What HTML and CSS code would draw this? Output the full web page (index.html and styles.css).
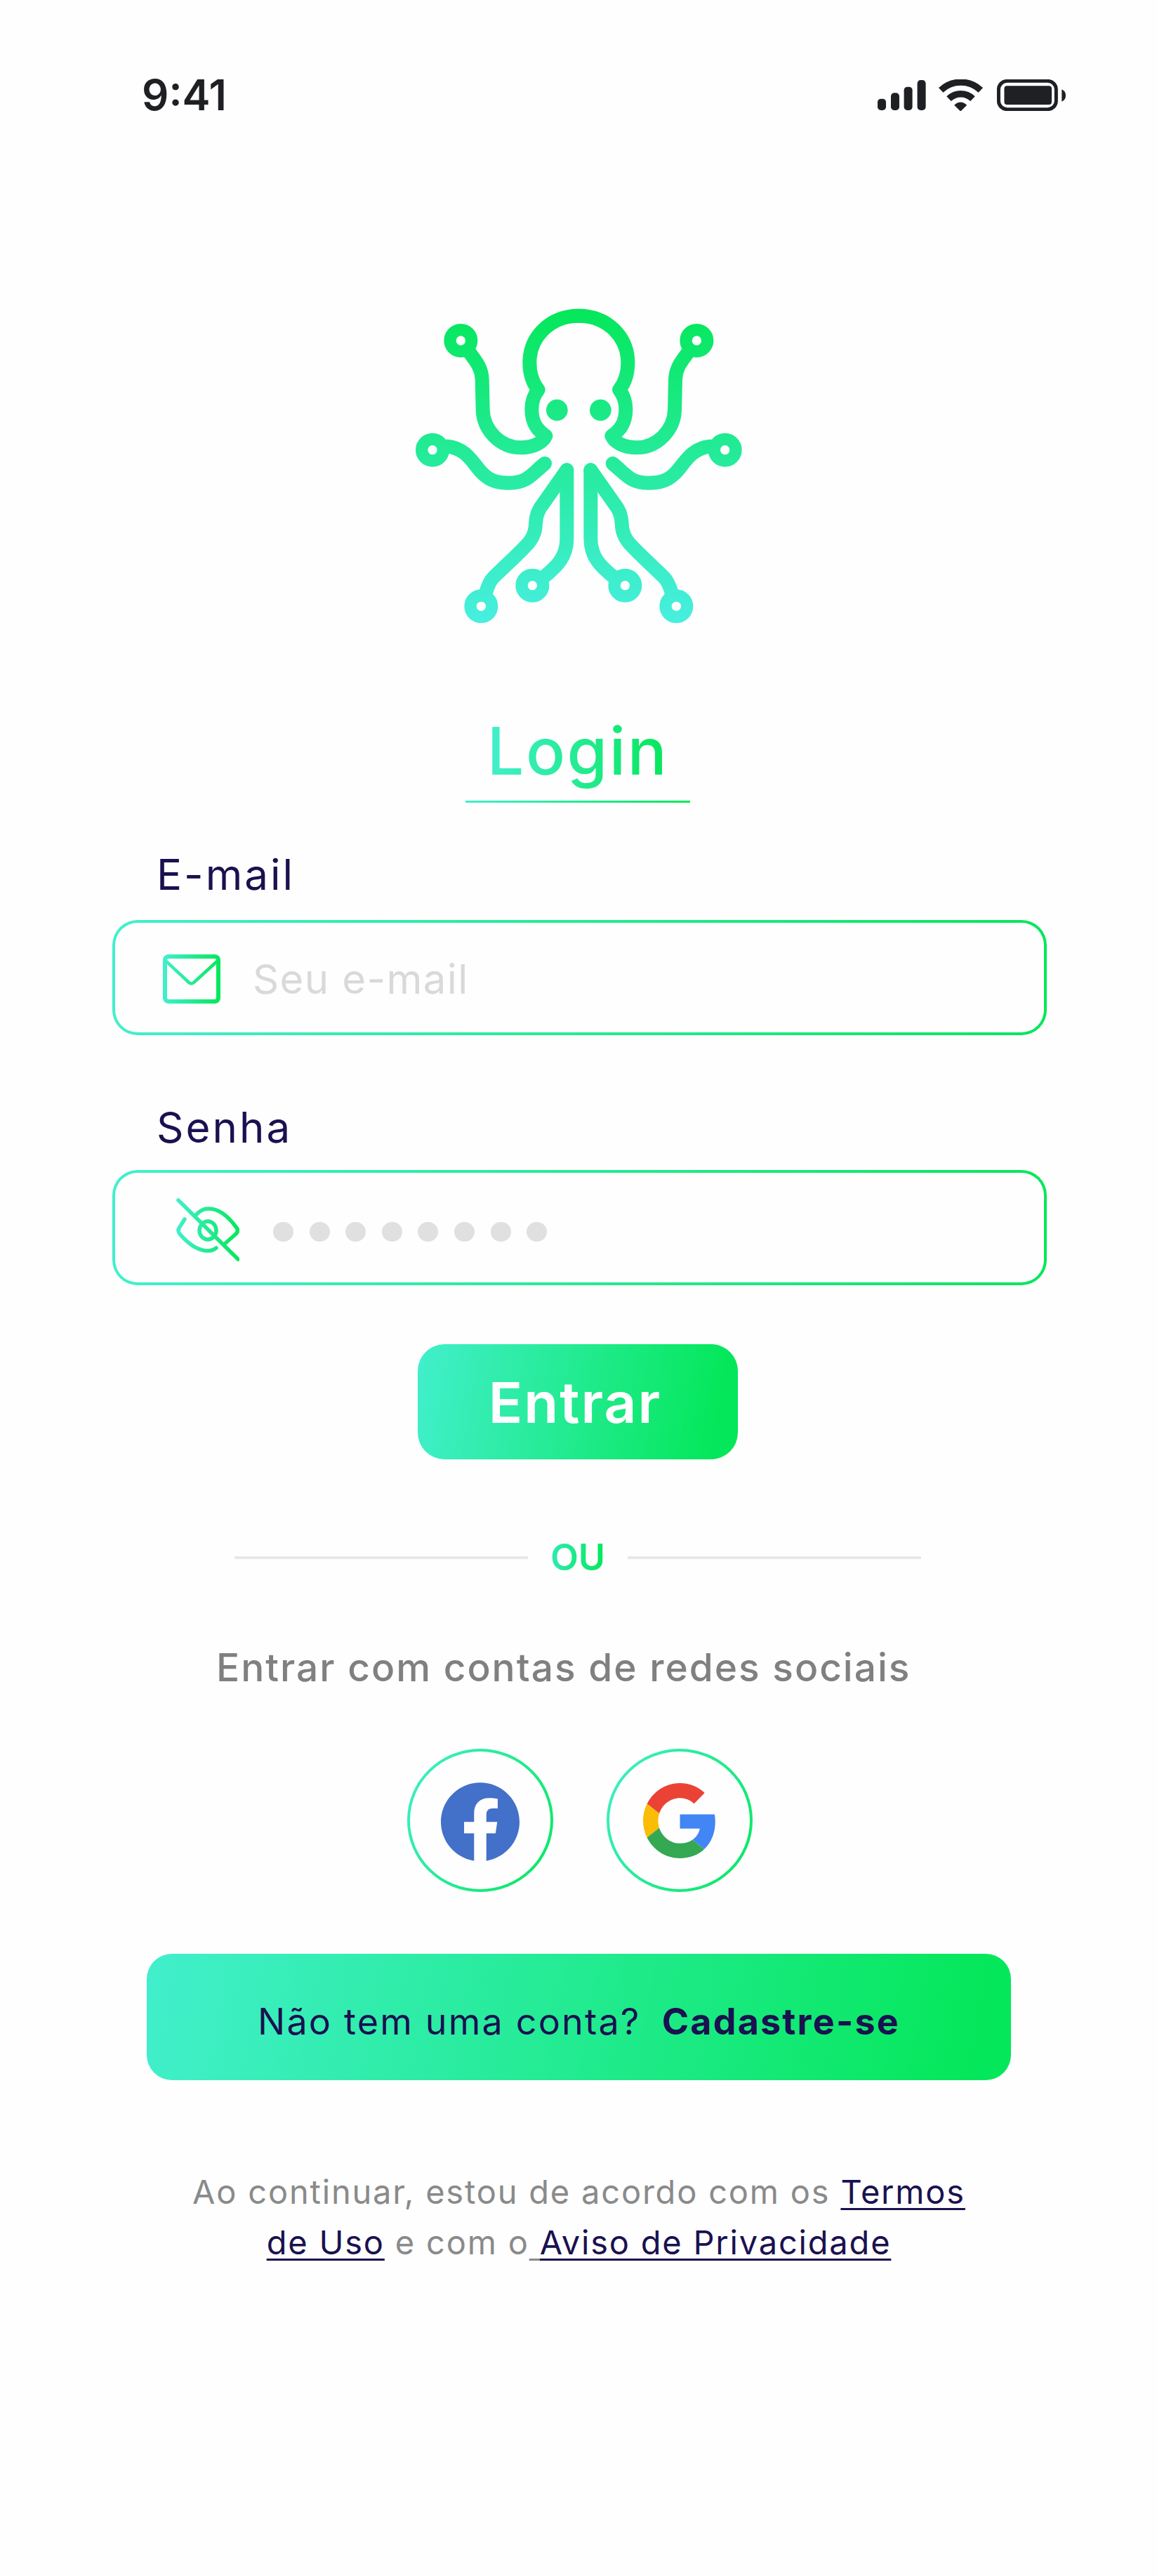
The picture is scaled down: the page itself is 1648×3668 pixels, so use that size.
FILE: index.html
```html
<!DOCTYPE html>
<html lang="pt-BR">
<head>
<meta charset="utf-8">
<title>Login</title>
<link rel="stylesheet" href="styles.css">
</head>
<body>
<svg class="defs" width="0" height="0" aria-hidden="true">
  <defs>
    <linearGradient id="logoGrad" gradientUnits="userSpaceOnUse" x1="0" y1="120" x2="0" y2="1460">
      <stop offset="0" stop-color="#05E75A"/><stop offset="1" stop-color="#47EFE0"/>
    </linearGradient>
    <linearGradient id="mailGrad" gradientUnits="userSpaceOnUse" x1="0" y1="0" x2="82" y2="0">
      <stop offset="0" stop-color="#42EFCC"/><stop offset="1" stop-color="#05E75A"/>
    </linearGradient>
    <linearGradient id="eyeGrad" gradientUnits="userSpaceOnUse" x1="0" y1="0" x2="90" y2="0">
      <stop offset="0" stop-color="#42EFCC"/><stop offset="1" stop-color="#05E75A"/>
    </linearGradient>
  </defs>
</svg>
<main class="page">
  <header class="status">
    <span class="time">9:41</span>
    <svg class="status-icons" viewBox="150 100 805 135" aria-hidden="true">
      <g fill="#1F2024">
        <rect x="150" y="183" width="36" height="49" rx="14"/>
        <rect x="207" y="158" width="36" height="74" rx="14"/>
        <rect x="263" y="132" width="36" height="100" rx="14"/>
        <rect x="320" y="103" width="36" height="129" rx="14"/>
        <path d="M505 237L478 210Q505 185 532 210Z"/>
        <rect x="692" y="128" width="203" height="80" rx="12"/>
        <path d="M938 143Q955 150 955 169Q955 188 938 195Z"/>
      </g>
      <g fill="none" stroke="#1F2024">
        <path stroke-width="28" d="M421 146A124 124 0 0 1 591 146"/>
        <path stroke-width="28" d="M455 183A73 73 0 0 1 557 183"/>
        <rect x="668" y="107" width="246" height="121" rx="36" stroke-width="15"/>
      </g>
    </svg>
  </header>

  <svg class="logo" viewBox="0 0 1560 1560" aria-label="Logo">
    <g fill="none" stroke="url(#logoGrad)" stroke-linecap="round" stroke-linejoin="round">
      <g id="halfOcto">
        <path stroke-width="60" d="M793 149C670 149 583 240 583 350C583 400 600 440 620 465C600 490 592 520 592 548C592 610 620 640 652 662C640 690 600 712 545 712C460 712 385 640 383 550L380 420C378 370 355 345 322 300"/>
        <circle cx="289" cy="255" r="46" stroke-width="52"/>
        <path stroke-width="60" stroke-linecap="butt" d="M218 709L232 707C320 715 345 790 385 825C420 860 460 863 495 863C570 863 590 830 648 780"/>
        <path stroke-width="60" d="M620 804L648 780"/>
        <circle cx="168" cy="722" r="46" stroke-width="52"/>
        <path stroke-width="60" d="M742 808L628 970C612 995 610 1020 608 1050C602 1110 575 1125 430 1265C415 1280 405 1300 395 1335"/>
        <circle cx="376" cy="1390" r="46" stroke-width="52"/>
        <path stroke-width="60" d="M742 808V1100C742 1180 700 1220 640 1268"/>
        <circle cx="595" cy="1301" r="46" stroke-width="52"/>
        <circle cx="700" cy="552" r="46" fill="url(#logoGrad)" stroke="none"/>
      </g>
      <use href="#halfOcto" transform="matrix(-1 0 0 1 1586 0)"/>
    </g>
  </svg>

  <h1 class="title"><span class="title-text">Login</span></h1>

  <form class="form">
    <label class="label label-first">E-mail</label>
    <div class="field field-mail">
      <svg class="mail-icon" viewBox="0 0 82 70" aria-hidden="true">
        <g fill="none" stroke="url(#mailGrad)" stroke-linecap="round" stroke-linejoin="round">
          <rect x="3" y="3" width="76" height="64" rx="5" stroke-width="6"/>
          <path stroke-width="4.5" d="M5 10L37 40Q40 43 44 40L77 10"/>
        </g>
      </svg>
      <span class="placeholder">Seu e-mail</span>
    </div>
    <label class="label label-second">Senha</label>
    <div class="field field-pass">
      <svg class="eye-icon" viewBox="0 0 90 90" aria-hidden="true">
        <g fill="none" stroke="url(#eyeGrad)" stroke-width="5.5" stroke-linecap="round" stroke-linejoin="round">
          <path d="M12 30L5 41Q1 46 5 51C18 66 32 75 45 75Q52 75 57 71"/>
          <path d="M28 24Q36 15 46 15C60 15 74 26 85 41Q90 46 85 51L68 66"/>
          <ellipse cx="45" cy="46" rx="12" ry="13"/>
          <path d="M3 3L88 87"/>
        </g>
      </svg>
      <div class="dots">
        <i class="dot"></i><i class="dot"></i><i class="dot"></i><i class="dot"></i>
        <i class="dot"></i><i class="dot"></i><i class="dot"></i><i class="dot"></i>
      </div>
    </div>
    <button class="enter" type="button">Entrar</button>
  </form>

  <div class="divider">
    <span class="rule"></span>
    <span class="or"><span class="or-text">OU</span></span>
    <span class="rule"></span>
  </div>

  <p class="social-text">Entrar com contas de redes sociais</p>

  <div class="socials">
    <a class="social">
      <svg class="fb" viewBox="0 0 24 24" aria-label="Facebook">
        <path fill="#4370C8" d="M24 12.073c0-6.627-5.373-12-12-12s-12 5.373-12 12c0 5.99 4.388 10.954 10.125 11.854v-8.385H7.078v-3.47h3.047V9.43c0-3.007 1.792-4.669 4.533-4.669 1.312 0 2.686.235 2.686.235v2.953H15.83c-1.491 0-1.956.925-1.956 1.874v2.25h3.328l-.532 3.47h-2.796v8.385C19.612 23.027 24 18.062 24 12.073z"/>
      </svg>
    </a>
    <a class="social">
      <svg class="google" viewBox="0 0 48 48" preserveAspectRatio="none" aria-label="Google">
        <path fill="#EA4335" d="M24 9.5c3.54 0 6.71 1.22 9.21 3.6l6.85-6.85C35.9 2.38 30.47 0 24 0 14.62 0 6.51 5.38 2.56 13.22l7.98 6.19C12.43 13.72 17.74 9.5 24 9.5z"/>
        <path fill="#4285F4" d="M46.98 24.55c0-1.57-.15-3.09-.38-4.55H24v9.02h12.94c-.58 2.96-2.26 5.48-4.78 7.18l7.73 6c4.51-4.18 7.09-10.36 7.09-17.65z"/>
        <path fill="#FBBC05" d="M10.53 28.59c-.48-1.45-.76-2.99-.76-4.59s.27-3.14.76-4.59l-7.98-6.19C.92 16.46 0 20.12 0 24c0 3.88.92 7.54 2.56 10.78l7.97-6.19z"/>
        <path fill="#34A853" d="M24 48c6.48 0 11.93-2.13 15.89-5.81l-7.73-6c-2.15 1.45-4.92 2.3-8.16 2.3-6.26 0-11.57-4.22-13.47-9.91l-7.98 6.19C6.51 42.62 14.62 48 24 48z"/>
      </svg>
    </a>
  </div>

  <div class="signup">
    <span class="signup-q">Não tem uma conta?</span>
    <strong class="signup-cta">Cadastre-se</strong>
  </div>

  <p class="terms">Ao continuar, estou de acordo com os <a class="link">Termos<br>de Uso</a> e com o<u class="gap"> </u><a class="link">Aviso de Privacidade</a></p>
</main>
</body>
</html>
```
FILE: styles.css
```css
* { box-sizing: border-box; }
html, body { margin: 0; padding: 0; }
body { background: #FEFEFE; font-family: "Inter", "Liberation Sans", sans-serif; }
.defs { position: absolute; }
.page { width: 1648px; height: 3668px; padding-top: 99px; overflow: hidden; }

.status { display: flex; justify-content: space-between; align-items: center; height: 72px; padding: 0 130px 0 202px; }
.time { font-size: 60px; line-height: 72px; font-weight: 600; color: #1F2024; }
.status-icons { width: 268px; height: 45px; display: block; }

.logo { display: block; width: 520px; height: 520px; margin: 229px 0 0 560px; }

.title { width: 320px; margin: 99px 0 0 663px; padding-bottom: 21px; border-bottom: 3px solid; border-image: linear-gradient(90deg, #42EFCC, #05E75A) 1; text-align: center; font-size: 93px; line-height: 100px; font-weight: 500; letter-spacing: 2.5px; }
.title-text { background: linear-gradient(90deg, #42EFCC, #05E75A); -webkit-background-clip: text; background-clip: text; color: transparent; }

.label { display: block; margin-left: 223px; font-size: 60px; line-height: 70px; font-weight: 400; color: #1A1150; letter-spacing: 3px; }
.label-first { margin-top: 67px; }
.label-second { margin-top: 96px; }

.field { display: flex; align-items: center; width: 1331px; height: 164px; margin-left: 160px; border: 4px solid transparent; border-radius: 36px; background: linear-gradient(#FEFEFE, #FEFEFE) padding-box, linear-gradient(90deg, #42EFCC, #05E75A) border-box; }
.field-mail { margin-top: 30px; padding-left: 68px; gap: 46px; }
.field-pass { margin-top: 26px; padding-left: 87px; gap: 48px; }
.mail-icon { width: 82px; height: 70px; flex: none; margin-top: 4px; }
.placeholder { margin-top: 4px; font-size: 58px; line-height: 70px; color: #D9D9D9; letter-spacing: 1.4px; }
.eye-icon { width: 90px; height: 90px; flex: none; margin-top: 6px; }
.dots { display: flex; gap: 22.6px; margin-top: 12px; }
.dot { display: block; width: 29px; height: 28px; border-radius: 50%; background: #E0E0E0; }

.enter { display: block; width: 456px; height: 164px; margin: 84px 0 0 595px; padding: 2px 8px 0 0; border: 0; border-radius: 38px; background: linear-gradient(100deg, #42EFCC, #05E75A 92%); color: #FFFFFF; font-family: inherit; font-size: 80px; line-height: 100px; font-weight: 600; letter-spacing: 2px; }

.divider { display: flex; align-items: center; width: 978px; height: 60px; margin: 110px 0 0 334px; }
.rule { flex: 1; height: 4px; background: #E8E8E8; }
.or { width: 142px; text-align: center; font-size: 52px; line-height: 60px; font-weight: 600; }
.or-text { background: linear-gradient(90deg, #2EEBB0, #05E75A); -webkit-background-clip: text; background-clip: text; color: transparent; }

.social-text { margin: 91px 0 0 308px; font-size: 55px; line-height: 70px; font-weight: 500; color: #808080; white-space: nowrap; letter-spacing: 2px; }

.socials { display: flex; gap: 76px; margin: 81px 0 0 580px; }
.social { display: flex; align-items: center; justify-content: center; width: 208px; height: 204px; border: 4px solid transparent; border-radius: 50%; background: linear-gradient(#FEFEFE, #FEFEFE) padding-box, linear-gradient(120deg, #42EFCC, #05E75A) border-box; }
.fb { width: 112px; height: 112px; display: block; margin-top: 4px; }
.google { width: 105px; height: 107px; display: block; }

.signup { display: flex; justify-content: center; align-items: center; gap: 30px; width: 1231px; height: 180px; margin: 88px 0 0 209px; padding-top: 14px; border-radius: 36px; background: linear-gradient(100deg, #42EFCC, #05E75A 96%); font-size: 52px; line-height: 70px; color: #1A1150; white-space: nowrap; letter-spacing: 2.2px; }
.signup-cta { font-weight: 700; }

.terms { width: 1231px; margin: 123px 0 0 209px; text-align: center; font-size: 47px; line-height: 72px; color: #8A8A8A; white-space: nowrap; letter-spacing: 1.8px; }
.link { color: #1A1150; text-decoration: underline; text-decoration-thickness: 3px; text-underline-offset: 6px; }
.gap { text-decoration: underline; text-decoration-thickness: 3px; text-underline-offset: 6px; }
```
